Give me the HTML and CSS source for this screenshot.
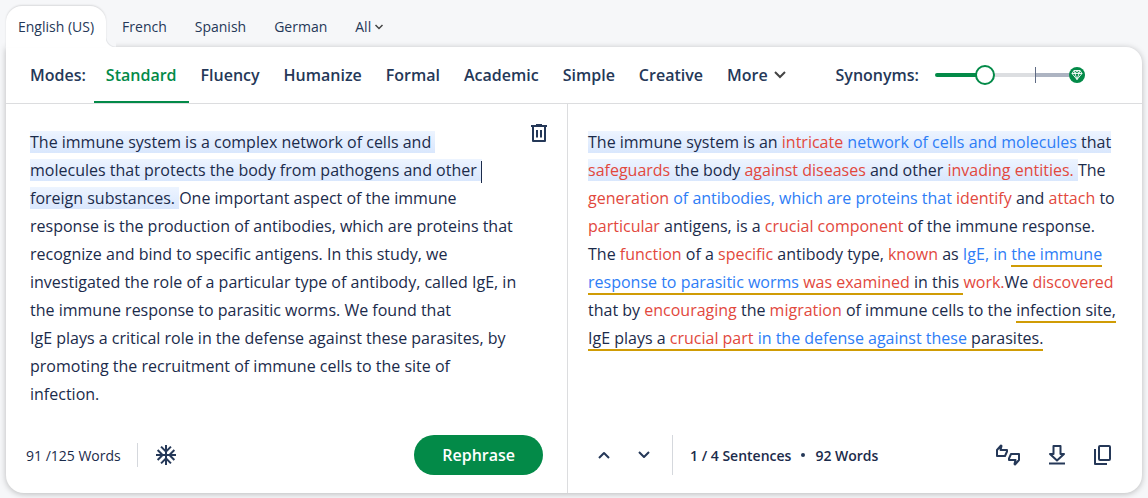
FILE: index.html
```html
<!DOCTYPE html>
<html lang="en">
<head>
  <meta charset="UTF-8">
  <title>Paraphraser</title>
  <meta name="viewport" content="width=device-width, initial-scale=1.0">
  <link rel="stylesheet" href="styles.css">
</head>
<body>
  <nav class="languages" aria-label="Language">
    <button class="lang active">English (US)</button>
    <button class="lang">French</button>
    <button class="lang">Spanish</button>
    <button class="lang">German</button>
    <button class="lang">All<svg class="chevron" width="8" height="6" viewBox="0 0 8 6"><path d="M0.500 1L4 4.500 7.500 1"/></svg></button>
  </nav>

  <main class="card">
    <div class="toolbar">
      <span class="modes-label">Modes:</span>
      <button class="mode active">Standard</button>
      <button class="mode">Fluency</button>
      <button class="mode">Humanize</button>
      <button class="mode">Formal</button>
      <button class="mode">Academic</button>
      <button class="mode">Simple</button>
      <button class="mode">Creative</button>
      <button class="mode more">More<svg class="chevron" width="12" height="8" viewBox="0 0 12 8"><path d="M1 1l5 5 5-5"/></svg></button>
      <label class="synonyms-label" for="synonyms">Synonyms:</label>
      <div class="slider">
        <input type="range" id="synonyms" min="0" max="100" value="31">
        <span class="tick"></span>
        <svg class="premium" width="16" height="16" viewBox="0 0 16 16"><circle cx="8" cy="8" r="8" fill="#038a48"/><path d="M5 3.500h6l2 3L8 12.500 3 6.500zM3 6.500h10M5 3.500L6 6.500 8 12.500 10 6.500l1-3M6 6.500L8 3.500l2 3" fill="none" stroke="#fff" stroke-width=".9" stroke-linejoin="round"/></svg>
      </div>
    </div>

    <div class="panes">
      <section class="pane source">
        <div class="input-row">
          <div class="text editor" contenteditable="true" role="textbox" aria-multiline="true" aria-label="Your text" spellcheck="false"><span class="current">The immune system is a complex network of cells and molecules&nbsp;that protects the body from pathogens and other <span class="caret"></span>foreign substances. </span>One important aspect of the immune response is the production of antibodies, which are proteins that recognize and bind to specific antigens. In this study, we investigated the role of a particular type of antibody, called IgE, in the immune response to parasitic worms. We found that IgE&nbsp;plays a critical role in the defense against these parasites, by promoting the recruitment of immune cells to the site of infection.</div>
          <button class="icon" aria-label="Delete text">
            <svg width="16" height="18" viewBox="0 0 16 18"><path d="M0 2h16M5 1h6M2 2.500V17h12V2.500M6 6v7.500M10 6v7.500"/></svg>
          </button>
        </div>
        <footer class="pane-footer">
          <span class="count">91 /125 Words</span>
          <span class="divider short"></span>
          <button class="icon" aria-label="Freeze words">
            <svg class="solid" width="20" height="20" viewBox="2 2 20 20"><path d="M22 11h-4.170l3.240-3.240-1.410-1.420L15 11h-2V9l4.660-4.660-1.420-1.410L13 6.170V2h-2v4.170L7.760 2.930 6.340 4.340 11 9v2H9L4.340 6.340 2.930 7.760 6.170 11H2v2h4.170l-3.240 3.240 1.410 1.420L9 13h2v2l-4.660 4.660 1.420 1.410L11 17.830V22h2v-4.170l3.240 3.240 1.420-1.410L13 15v-2h2l4.660 4.660 1.410-1.420L17.830 13H22z"/></svg>
          </button>
          <button class="rephrase">Rephrase</button>
        </footer>
      </section>

      <section class="pane output">
        <p class="text"><span class="current">The immune system is an <span class="changed">intricate</span> <span class="moved">network of cells and molecules</span> that <span class="changed">safeguards</span> the body <span class="changed">against diseases</span> and other <span class="changed">invading entities.</span> </span>The <span class="changed">generation</span> <span class="moved">of antibodies, which are proteins that</span> <span class="changed">identify</span> and <span class="changed">attach</span> to <span class="changed">particular</span> antigens, is a <span class="changed">crucial component</span> of the immune response. The <span class="changed">function</span> of a <span class="changed">specific</span> antibody type, <span class="changed">known</span> as <span class="moved">IgE, in </span><span class="kept"><span class="moved">the immune response to parasitic worms</span> <span class="changed">was examined</span> in this </span><span class="changed">work.</span>We <span class="changed">discovered</span> that by <span class="changed">encouraging</span> the <span class="changed">migration</span> of immune cells to the <span class="kept">infection site, IgE plays a <span class="changed">crucial part</span> <span class="moved">in the defense against these</span> parasites.</span></p>
        <footer class="pane-footer">
          <button class="icon step" aria-label="Previous sentence">
            <svg width="12" height="8" viewBox="0 0 12 8"><path d="M1 7l5-5 5 5"/></svg>
          </button>
          <button class="icon step" aria-label="Next sentence">
            <svg width="12" height="8" viewBox="0 0 12 8"><path d="M1 1l5 5 5-5"/></svg>
          </button>
          <span class="divider"></span>
          <span class="stats">1 / 4 Sentences</span>
          <span class="dot"></span>
          <span class="stats">92 Words</span>
          <div class="actions">
            <button class="icon" aria-label="Give feedback">
              <svg width="24" height="22" viewBox="0 0 24 22"><path d="M1 6L5 1.500l.5.5-1 4H11v1.500L9 12H1zM23 16l-4 4.500-.5-.5 1-4H13v-1.500L15 10h8z"/></svg>
            </button>
            <button class="icon" aria-label="Download">
              <svg width="16" height="20" viewBox="0 0 16 20"><path d="M4.500 1h7v8H15l-7 6.500L1 9h3.500zM0 18.500h16"/></svg>
            </button>
            <button class="icon" aria-label="Copy text">
              <svg width="18" height="20" viewBox="0 0 18 20"><rect x="5" y="1" width="11" height="14" rx="1"/><path d="M1 4v15h12"/></svg>
            </button>
          </div>
        </footer>
      </section>
    </div>
  </main>
</body>
</html>
```

FILE: styles.css
```css
* { box-sizing: border-box; margin: 0; padding: 0; }

body {
  font-family: "Open Sans", sans-serif;
  font-size: 16px;
  background: #f6f7f9;
  color: #1b2b4b;
  min-height: 100vh;
  padding: 6px 6px 5px;
  display: flex;
  flex-direction: column;
}

button {
  font: inherit;
  color: inherit;
  background: none;
  border: none;
  cursor: pointer;
}

svg {
  display: block;
  overflow: visible;
}

.languages {
  display: flex;
  gap: 4px;
  height: 41px;
}

.lang {
  display: flex;
  align-items: center;
  gap: 4px;
  padding: 0 12px;
  font-size: 14px;
  color: #253858;
}

.lang.active {
  position: relative;
  z-index: 1;
  background: #fff;
  border-radius: 16px 16px 0 0;
  box-shadow: 0 -1px 2px rgba(0, 0, 0, 0.12);
}

/* curve that joins the active tab to the card */
.lang.active::after {
  content: "";
  position: absolute;
  left: 100%;
  bottom: 0;
  width: 10px;
  height: 10px;
  background: radial-gradient(circle at 100% 0, #f6f7f9 9px, #e4e6e9 10px, #fff 11px);
}

.chevron {
  fill: none;
  stroke: #444;
  stroke-width: 2;
}

.lang .chevron {
  stroke-width: 1.5;
}

.card {
  flex: 1;
  display: flex;
  flex-direction: column;
  background: #fff;
  border-radius: 0 16px 18px 18px;
  box-shadow: 0 1px 6px rgba(0, 0, 0, 0.25);
}

.toolbar {
  display: flex;
  align-items: stretch;
  height: 57px;
  padding-left: 24px;
  border-bottom: 1px solid #dcdddf;
  font-weight: 600;
  color: #253858;
}

.modes-label,
.synonyms-label {
  display: flex;
  align-items: center;
}

.modes-label {
  margin-right: 8px;
}

.mode {
  display: flex;
  align-items: center;
  padding: 2px 12px 0;
  border-bottom: 2px solid transparent;
}

.mode.active {
  color: #038a48;
  border-color: #038a48;
}

.more {
  gap: 6px;
}

.synonyms-label {
  margin-left: auto;
  margin-right: 16px;
}

.slider {
  position: relative;
  display: flex;
  align-items: center;
  width: 150px;
  margin-right: 57px;
}

.slider input {
  appearance: none;
  width: 100%;
  height: 4px;
  border-radius: 2px;
  background: linear-gradient(to right, #038a48 50px, #dcdee1 50px, #dcdee1 100px, #adb4c2 100px);
}

.slider input::-webkit-slider-thumb {
  appearance: none;
  width: 20px;
  height: 20px;
  border: 2px solid #038a48;
  border-radius: 50%;
  background: #fff;
}

.tick {
  position: absolute;
  left: 100px;
  width: 1px;
  height: 16px;
  background: #5f6b84;
}

.premium {
  position: absolute;
  right: 0;
}

.panes {
  flex: 1;
  display: grid;
  grid-template-columns: 561fr 575fr;
}

.pane {
  display: flex;
  flex-direction: column;
  justify-content: space-between;
  gap: 24px;
  padding: 20px 20px 18px;
}

.source {
  padding-right: 16px;
}

.output {
  border-left: 1px solid #dcdddf;
}

.input-row {
  display: flex;
  align-items: flex-start;
  justify-content: space-between;
  padding-left: 4px;
}

.text {
  margin-top: 4px;
  line-height: 28px;
}

.editor {
  max-width: 488px;
  white-space: pre-wrap;
  outline: none;
}

.current {
  background: linear-gradient(#edf4ff, #d9e7fd);
  -webkit-box-decoration-break: clone;
  box-decoration-break: clone;
}

.caret {
  display: inline-block;
  width: 1px;
  height: 22px;
  vertical-align: middle;
  background: #1b2b4b;
}

.changed {
  color: #e2483d;
}

.moved {
  color: #2e7df6;
}

.kept {
  border-bottom: 2px solid #d09c05;
}

.pane-footer {
  display: flex;
  align-items: center;
  height: 40px;
}

.count {
  font-size: 14px;
}

.divider {
  width: 1px;
  height: 40px;
  margin: 0 17px;
  background: #d5d8dd;
}

.divider.short {
  height: 24px;
  margin: 0 14px 0 16px;
}

.icon {
  padding: 0 4px;
}

.icon svg {
  fill: none;
  stroke: #253858;
  stroke-width: 2;
  stroke-linejoin: round;
}

.icon .solid {
  fill: #253858;
  stroke: none;
}

.rephrase {
  margin-left: auto;
  margin-right: 8px;
  height: 40px;
  padding: 0 28px;
  border-radius: 20px;
  background: #038a48;
  color: #fff;
  font-weight: 600;
}

.step {
  width: 32px;
  padding: 0 10px;
}

.step + .step {
  margin-left: 8px;
}

.step + .divider {
  margin-left: 12px;
}

.stats {
  font-size: 14px;
  font-weight: 600;
}

.dot {
  width: 4px;
  height: 4px;
  margin: 0 10px;
  border-radius: 50%;
  background: #253858;
}

.actions {
  display: flex;
  align-items: center;
  gap: 21px;
  margin-left: auto;
  margin-right: 6px;
}
```
